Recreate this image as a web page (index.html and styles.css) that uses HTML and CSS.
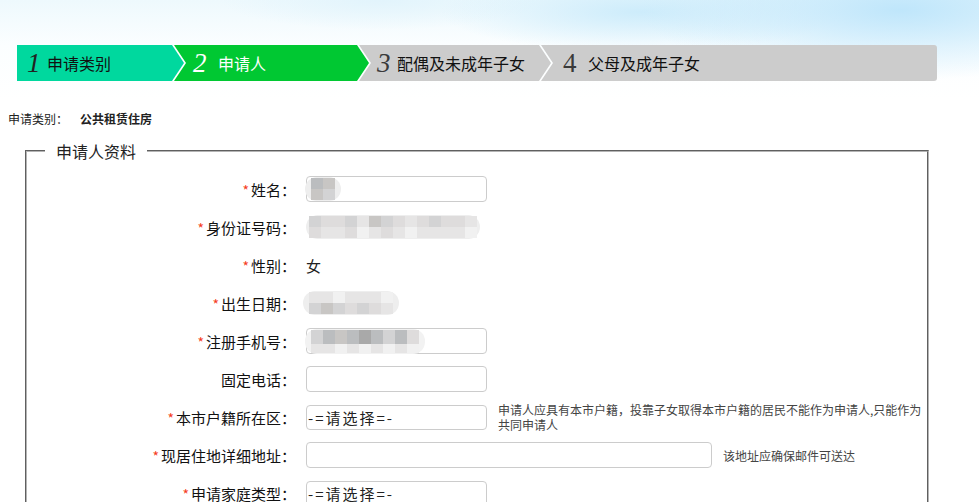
FILE: index.html
```html
<!DOCTYPE html>
<html lang="zh-CN">
  <head>
    <meta charset="UTF-8" />
    <meta name="viewport" content="width=device-width, initial-scale=1.0" />
    <title>申请人资料</title>
    <link rel="stylesheet" href="styles.css">
  </head>
  <body>
    <div class="sky">
      <ol class="steps">
        <li class="step step-done"><span class="num">1</span>申请类别</li>
        <li class="step step-current"><span class="num">2</span>申请人</li>
        <li class="step"><span class="num">3</span>配偶及未成年子女</li>
        <li class="step step-last"><span class="num">4</span>父母及成年子女</li>
      </ol>
    </div>

    <p class="category">申请类别：<strong>公共租赁住房</strong></p>

    <fieldset class="panel">
      <legend>申请人资料</legend>

      <div class="row">
        <label class="label"><i>*</i>姓名：</label>
        <div class="field">
          <input type="text" class="text" />
          <span class="mosaic mosaic-name">
            <b class="s5"></b><b class="s4"></b><b class="s4"></b><b class="s3"></b>
          </span>
        </div>
      </div>

      <div class="row">
        <label class="label"><i>*</i>身份证号码：</label>
        <div class="field">
          <span class="mosaic mosaic-id">
            <b class="s3"></b><b class="s2"></b><b class="s2"></b><b class="s1"></b>
            <b class="s2"></b><b class="s1"></b><b class="s3"></b><b class="s2"></b>
            <b class="s1"></b><b class="s0"></b><b class="s4"></b><b class="s1"></b>
            <b class="s3"></b><b class="s2"></b><b class="s2"></b><b class="s1"></b>
            <b class="s1"></b><b class="s0"></b><b class="s2"></b><b class="s1"></b>
            <b class="s3"></b><b class="s1"></b><b class="s2"></b><b class="s1"></b>
            <b class="s2"></b><b class="s1"></b><b class="s1"></b><b class="s0"></b>
          </span>
        </div>
      </div>

      <div class="row">
        <label class="label"><i>*</i>性别：</label>
        <div class="field"><span class="value">女</span></div>
      </div>

      <div class="row">
        <label class="label"><i>*</i>出生日期：</label>
        <div class="field">
          <span class="mosaic mosaic-date">
            <b class="s1"></b><b class="s3"></b><b class="s1"></b><b class="s4"></b>
            <b class="s0"></b><b class="s3"></b><b class="s1"></b><b class="s2"></b>
            <b class="s1"></b><b class="s3"></b><b class="s1"></b><b class="s2"></b>
            <b class="s0"></b><b class="s1"></b>
          </span>
        </div>
      </div>

      <div class="row">
        <label class="label"><i>*</i>注册手机号：</label>
        <div class="field">
          <input type="text" class="text" />
          <span class="mosaic mosaic-phone">
            <b class="s3"></b><b class="s1"></b><b class="s5"></b><b class="s1"></b>
            <b class="s4"></b><b class="s0"></b><b class="s5"></b><b class="s1"></b>
            <b class="s6"></b><b class="s0"></b><b class="s5"></b><b class="s1"></b>
            <b class="s3"></b><b class="s0"></b><b class="s5"></b><b class="s1"></b>
            <b class="s2"></b><b class="s0"></b>
          </span>
        </div>
      </div>

      <div class="row">
        <label class="label">固定电话：</label>
        <div class="field"><input type="text" class="text" /></div>
      </div>

      <div class="row">
        <label class="label"><i>*</i>本市户籍所在区：</label>
        <div class="field">
          <select class="text choice"><option>-=请选择=-</option></select>
          <span class="hint hint-wrap">申请人应具有本市户籍，投靠子女取得本市户籍的居民不能作为申请人,只能作为共同申请人</span>
        </div>
      </div>

      <div class="row">
        <label class="label"><i>*</i>现居住地详细地址：</label>
        <div class="field">
          <input type="text" class="text wide" />
          <span class="hint">该地址应确保邮件可送达</span>
        </div>
      </div>

      <div class="row">
        <label class="label"><i>*</i>申请家庭类型：</label>
        <div class="field">
          <select class="text choice"><option>-=请选择=-</option></select>
        </div>
      </div>
    </fieldset>
  </body>
</html>
```

FILE: styles.css
```css
html {
  font-family: "Noto Sans CJK SC", "Liberation Sans", sans-serif;
}

body {
  margin: 0;
  background-color: #fff;
  color: #222;
}

.sky {
  padding: 45px 0 30px 17px;
  background:
    radial-gradient(ellipse 260px 70px at 900px 10px, #bfe6fb 0, rgba(191, 230, 251, 0) 100%),
    radial-gradient(ellipse 200px 40px at 640px 12px, #cdecfb 0, rgba(205, 236, 251, 0) 100%),
    radial-gradient(ellipse 160px 30px at 380px 0, #e2f4fc 0, rgba(226, 244, 252, 0) 100%),
    linear-gradient(to bottom, #eef9fd 0, #fbfeff 45px, #fff 100px);
}

.steps {
  display: flex;
  width: 920px;
  height: 36px;
  margin: 0;
  padding: 0;
  list-style: none;
}

.step {
  display: flex;
  align-items: center;
  width: 192px;
  margin-left: -10px;
  padding-left: 18px;
  box-sizing: border-box;
  background-color: #cccccc;
  color: #111;
  font-size: 16px;
  clip-path: polygon(0 0, calc(100% - 12px) 0, 100% 50%, calc(100% - 12px) 100%, 0 100%, 12px 50%);
}

.step-done {
  width: 167px;
  margin-left: 0;
  padding-left: 10px;
  background-color: #00d89e;
  clip-path: polygon(0 0, calc(100% - 12px) 0, 100% 50%, calc(100% - 12px) 100%, 0 100%);
}

.step-current {
  width: 195px;
  padding-left: 19px;
  background-color: #00c832;
  color: #fff;
}

.step-last {
  flex: 1;
  padding-left: 22px;
  border-radius: 0 3px 3px 0;
  clip-path: polygon(0 0, 100% 0, 100% 100%, 0 100%, 12px 50%);
}

.num {
  width: 12px;
  margin-right: 8px;
  font-family: "Liberation Serif", serif;
  font-style: italic;
  font-size: 27px;
  line-height: 1;
  color: #222;
}

.step-current .num {
  margin-right: 13px;
  color: #fff;
  font-weight: 300;
}

.step:nth-child(3) .num,
.step-last .num {
  color: #3a3a3a;
}

.step-last .num {
  margin-right: 13px;
  font-style: normal;
}

.category {
  margin: 0 0 0 8px;
  font-size: 12px;
  line-height: 16px;
}

.category strong {
  margin-left: 12px;
}

.panel {
  width: 904px;
  box-sizing: border-box;
  margin: 13px 0 0 25px;
  padding: 8px 0 0 0;
  border: 2px groove #b4b4b4;
}

.panel legend {
  margin-left: 18px;
  padding: 0 11px;
  font-size: 16px;
  line-height: 22px;
  color: #222;
}

.row {
  display: flex;
  align-items: center;
  height: 38px;
}

.label {
  width: 269px;
  margin-right: 10px;
  text-align: right;
  font-size: 15px;
  color: #111;
}

.label i {
  font-style: normal;
  font-size: 14px;
  color: #f53c1e;
  margin-right: 2px;
}

.field {
  position: relative;
  display: flex;
  align-items: center;
}

.text {
  width: 181px;
  height: 26px;
  box-sizing: border-box;
  padding: 0 2px;
  border: 1px solid #cccccc;
  border-radius: 4px;
  background-color: #fff;
  font-family: inherit;
  font-size: 14px;
  color: #222;
}

.choice {
  appearance: none;
  height: 25px;
  padding: 0 1px;
  font-size: 15px;
  letter-spacing: 2px;
}

.wide {
  width: 406px;
}

.value {
  font-size: 15px;
}

.hint {
  margin-left: 11px;
  font-size: 12px;
  line-height: 15px;
  color: #444;
}

.hint-wrap {
  width: 426px;
}

.mosaic {
  display: inline-grid;
  grid-auto-flow: column;
  grid-template-rows: 11px 11px;
  grid-auto-columns: 12px;
  padding: 1px 6px;
  background-color: #eeeeee;
  border-radius: 12px;
  filter: blur(0.5px);
}

.mosaic b {
  display: block;
}

.mosaic-name,
.mosaic-phone {
  position: absolute;
  left: -1px;
  top: 1px;
}

.mosaic-phone {
  grid-template-rows: 14px 9px;
  background-color: #f2f2f2;
}

.mosaic-id {
  padding: 1px 3px;
}

.mosaic-date {
  margin-left: -3px;
}

.s0 { background-color: #f1f1f1; }
.s1 { background-color: #e6e5e5; }
.s2 { background-color: #dedcdc; }
.s3 { background-color: #d3d3d4; }
.s4 { background-color: #c8c6c4; }
.s5 { background-color: #bbbdbf; }
.s6 { background-color: #a9a9a9; }
```
